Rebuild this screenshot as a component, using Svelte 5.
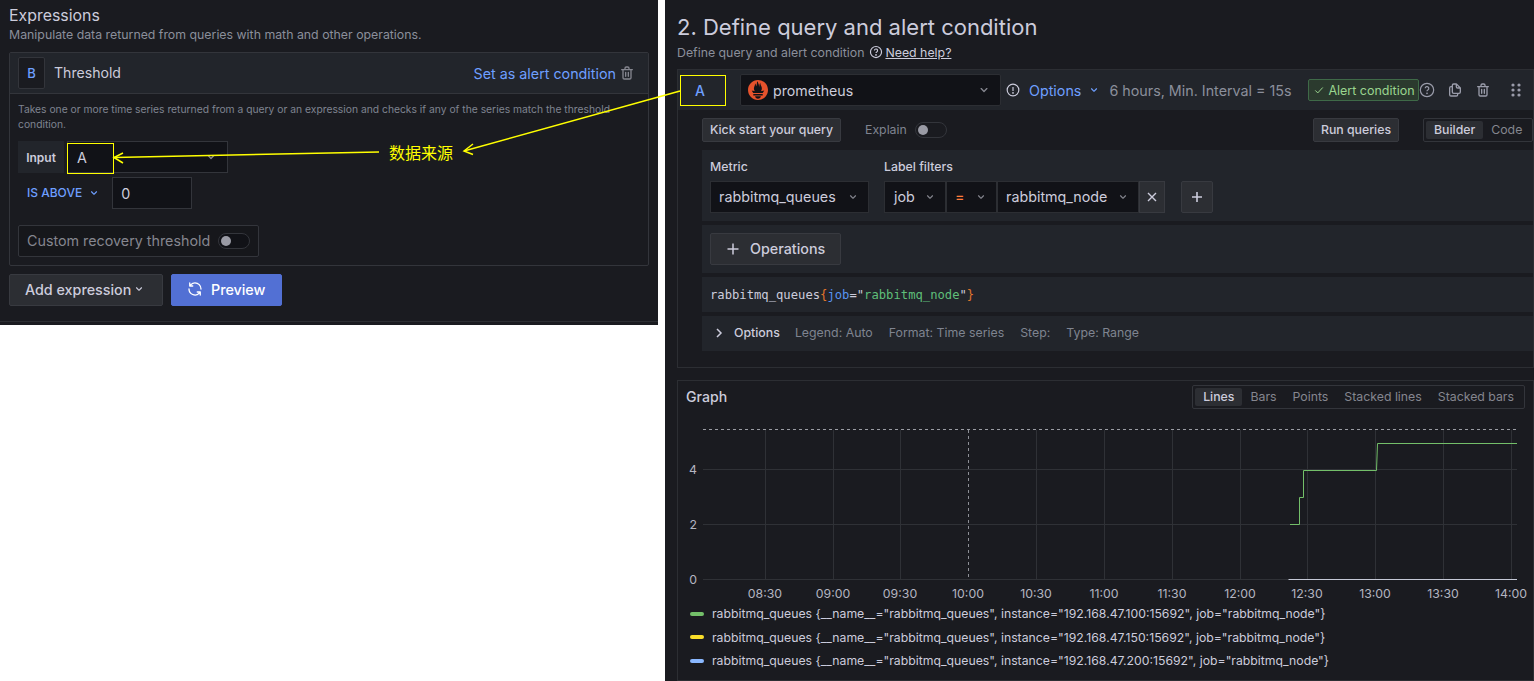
<script>
	const TRASH = 'M10,18a1,1,0,0,0,1-1V11a1,1,0,0,0-2,0v6A1,1,0,0,0,10,18ZM20,6H16V5a3,3,0,0,0-3-3H11A3,3,0,0,0,8,5V6H4A1,1,0,0,0,4,8H5V19a3,3,0,0,0,3,3h8a3,3,0,0,0,3-3V8h1a1,1,0,0,0,0-2ZM10,5a1,1,0,0,1,1-1h2a1,1,0,0,1,1,1V6H10Zm7,14a1,1,0,0,1-1,1H8a1,1,0,0,1-1-1V8H17Zm-3-1a1,1,0,0,0,1-1V11a1,1,0,0,0-2,0v6A1,1,0,0,0,14,18Z';
	const CHEVRON = 'M17,9.17a1,1,0,0,0-1.41,0L12,12.71,8.46,9.17a1,1,0,0,0-1.41,0,1,1,0,0,0,0,1.42l4.24,4.24a1,1,0,0,0,1.42,0L17,10.59A1,1,0,0,0,17,9.17Z';
	const SYNC = 'M19.91,15.51H15.38a1,1,0,0,0,0,2h2.4A8,8,0,0,1,4,12a1,1,0,0,0-2,0,10,10,0,0,0,16.88,7.23V21a1,1,0,0,0,2,0V16.5A1,1,0,0,0,19.91,15.51ZM12,2A10,10,0,0,0,5.12,4.77V3a1,1,0,0,0-2,0V7.5a1,1,0,0,0,1,1h4.5a1,1,0,0,0,0-2H6.22A8,8,0,0,1,20,12a1,1,0,0,0,2,0A10,10,0,0,0,12,2Z';
	const COPY = 'M21,8.94a1.31,1.31,0,0,0-.06-.27l0-.09a1.07,1.07,0,0,0-.19-.28h0l-6-6h0a1.07,1.07,0,0,0-.28-.19.32.32,0,0,0-.09,0A.88.88,0,0,0,14.05,2H10A3,3,0,0,0,7,5V6H6A3,3,0,0,0,3,9V19a3,3,0,0,0,3,3h8a3,3,0,0,0,3-3V18h1a3,3,0,0,0,3-3V9S21,9,21,8.94ZM15,5.41,17.59,8H16a1,1,0,0,1-1-1ZM15,19a1,1,0,0,1-1,1H6a1,1,0,0,1-1-1V9A1,1,0,0,1,6,8H7v7a3,3,0,0,0,3,3h5Zm4-4a1,1,0,0,1-1,1H10a1,1,0,0,1-1-1V5a1,1,0,0,1,1-1h3V7a3,3,0,0,0,3,3h3Z';
	const PROM = 'M12 0C5.373 0 0 5.372 0 12c0 6.627 5.373 12 12 12s12-5.373 12-12c0-6.628-5.373-12-12-12zm0 22.46c-1.885 0-3.414-1.26-3.414-2.814h6.828c0 1.553-1.529 2.813-3.414 2.813zm5.64-3.745H6.36v-2.046h11.28v2.046zm-.04-3.098H6.391c-.037-.043-.075-.086-.111-.13-1.155-1.401-1.427-2.133-1.69-2.879-.005-.025 1.4.287 2.395.511 0 0 .513.119 1.262.255-.72-.843-1.147-1.915-1.147-3.01 0-2.406 1.845-4.508 1.18-6.207.648.053 1.34 1.367 1.387 3.422.689-.951.977-2.69.977-3.755 0-1.103.727-2.385 1.454-2.429-.648 1.068.168 1.984.894 4.256.272.854.237 2.29.447 3.2.07-1.892.395-4.652 1.595-5.605-.529 1.2.079 2.702.494 3.424.671 1.164 1.078 2.047 1.078 3.716a4.642 4.642 0 01-1.11 2.996c.792-.149 1.34-.283 1.34-.283l2.573-.502s-.374 1.538-1.81 3.019z';

	const times = [
		['08:30', 765], ['09:00', 833], ['09:30', 900], ['10:00', 968], ['10:30', 1036], ['11:00', 1104],
		['11:30', 1172], ['12:00', 1240], ['12:30', 1307], ['13:00', 1375], ['13:30', 1443], ['14:00', 1511]
	];
	const ticks = [['4', 469], ['2', 524], ['0', 579]];
	const tabs = ['Lines', 'Bars', 'Points', 'Stacked lines', 'Stacked bars'];
	const legend = [
		{ color: '#73bf69', ip: '192.168.47.100' },
		{ color: '#fade2a', ip: '192.168.47.150' },
		{ color: '#8ab8ff', ip: '192.168.47.200' }
	];
	// chart svg starts at x=678, y=420 of the page
	const ox = 678;
	const oy = 420;
</script>

{#snippet icon(d, size = 16, cls = '')}
	<svg class="ico {cls}" width={size} height={size} viewBox="0 0 24 24" fill="currentColor"><path {d} /></svg>
{/snippet}

<div class="page">
	<section class="left">
		<div class="h-exp">Expressions</div>
		<div class="sub-exp">Manipulate data returned from queries with math and other operations.</div>

		<div class="card">
			<div class="card-head">
				<span class="ref-b">B</span>
				<span class="card-name">Threshold</span>
				<span class="set-alert">Set as alert condition</span>
				{@render icon(TRASH, 16, 'muted')}
			</div>
			<div class="card-body">
				<p class="desc">Takes one or more time series returned from a query or an expression and checks if any of the series match the threshold condition.</p>
				<div class="input-row">
					<span class="input-label">Input</span>
					<div class="input-select">
						<span>A</span>
						{@render icon(CHEVRON, 16, 'muted')}
					</div>
				</div>
				<div class="above-row">
					<span class="above">IS ABOVE</span>
					{@render icon(CHEVRON, 14, 'blue')}
					<span class="zero">0</span>
				</div>
				<div class="recovery">
					<span>Custom recovery threshold</span>
					<span class="toggle"><i></i></span>
				</div>
			</div>
		</div>

		<div class="actions">
			<button class="btn add">Add expression {@render icon(CHEVRON, 14)}</button>
			<button class="btn preview">{@render icon(SYNC, 16)} Preview</button>
		</div>
		<div class="left-rule"></div>
	</section>

	<section class="right">
		<h1>2. Define query and alert condition</h1>
		<div class="sub-def">
			Define query and alert condition
			<svg class="ico" width="14" height="14" viewBox="0 0 24 24" fill="none" stroke="#ccccdc" stroke-width="2"><circle cx="12" cy="12" r="9.5" /><path d="M9.3 9.5a2.7 2.7 0 1 1 4 2.4c-.9.5-1.3 1-1.3 2" /><circle cx="12" cy="17" r=".6" /></svg>
			<span class="help">Need help?</span>
		</div>

		<div class="query">
			<div class="q-head">
				<span class="ref-a">A</span>
				<div class="ds">
					<svg class="ico" width="20" height="20" viewBox="0 0 24 24" fill="#e6522c"><path d={PROM} /></svg>
					<span class="ds-name">prometheus</span>
					{@render icon(CHEVRON, 16, 'muted')}
				</div>
				<svg class="ico info" width="14" height="14" viewBox="0 0 24 24" fill="none" stroke="#ccccdc" stroke-width="2"><circle cx="12" cy="12" r="10" /><path d="M12 7v6.5" /><circle cx="12" cy="17" r=".6" /></svg>
				<span class="opt-link">Options</span>
				{@render icon(CHEVRON, 14, 'blue')}
				<span class="interval">6 hours, Min. Interval = 15s</span>
				<span class="badge">
					<svg width="10" height="10" viewBox="0 0 12 12" fill="none" stroke="#9ad58f" stroke-width="1.2"><path d="M1.5 6.5 4.5 9.5 10.5 3" /></svg>
					Alert condition
				</span>
				<div class="q-icons">
					<svg class="ico" width="16" height="16" viewBox="0 0 24 24" fill="none" stroke="#9a9caa" stroke-width="1.8"><circle cx="12" cy="12" r="10" /><path d="M9.3 9.5a2.7 2.7 0 1 1 4 2.4c-.9.5-1.3 1-1.3 2" /><circle cx="12" cy="17" r=".5" /></svg>
					{@render icon(COPY, 16, 'muted2')}
					{@render icon(TRASH, 16, 'muted2')}
					<svg class="ico drag" width="16" height="16" viewBox="0 0 16 16" fill="#9a9caa"><circle cx="5" cy="3" r="1.6" /><circle cx="11" cy="3" r="1.6" /><circle cx="5" cy="8" r="1.6" /><circle cx="11" cy="8" r="1.6" /><circle cx="5" cy="13" r="1.6" /><circle cx="11" cy="13" r="1.6" /></svg>
				</div>
			</div>

			<div class="q-body">
				<div class="toolbar">
					<button class="btn-s kick">Kick start your query</button>
					<span class="explain">Explain</span>
					<span class="toggle small"><i></i></span>
					<span class="grow"></span>
					<button class="btn-s run">Run queries</button>
					<div class="modes"><span class="on">Builder</span><span>Code</span></div>
				</div>

				<div class="builder">
					<div class="field">
						<div class="f-label">Metric</div>
						<div class="sel metric">rabbitmq_queues {@render icon(CHEVRON, 14, 'muted')}</div>
					</div>
					<div class="field filters">
						<div class="f-label">Label filters</div>
						<div class="filter-row">
							<div class="sel job">job {@render icon(CHEVRON, 14, 'muted')}</div>
							<div class="sel eq"><b>=</b> {@render icon(CHEVRON, 14, 'muted')}</div>
							<div class="sel val">rabbitmq_node {@render icon(CHEVRON, 14, 'muted')}</div>
							<div class="x"><svg width="10" height="10" viewBox="0 0 10 10" stroke="#ccccdc" stroke-width="1.4"><path d="M1 1 9 9M9 1 1 9" /></svg></div>
							<div class="plus"><svg width="12" height="12" viewBox="0 0 12 12" stroke="#ccccdc" stroke-width="1.6"><path d="M6 1v10M1 6h10" /></svg></div>
						</div>
					</div>
				</div>

				<div class="ops">
					<button class="op-btn"><svg width="12" height="12" viewBox="0 0 12 12" stroke="#ccccdc" stroke-width="1.5"><path d="M6 .5v11M.5 6h11" /></svg> Operations</button>
				</div>

				<div class="code"><span>rabbitmq_queues</span><span class="c-o">&#123;</span><span class="c-b">job</span><span>="</span><span class="c-g">rabbitmq_node</span><span>"</span><span class="c-o">&#125;</span></div>

				<div class="opt-row">
					<svg width="8" height="10" viewBox="0 0 8 10" fill="none" stroke="#ccccdc" stroke-width="1.5"><path d="M2 1l4 4-4 4" /></svg>
					<b>Options</b>
					<span>Legend: Auto</span>
					<span>Format: Time series</span>
					<span>Step:</span>
					<span>Type: Range</span>
				</div>
			</div>
		</div>

		<div class="graph">
			<div class="g-head">
				<span class="g-title">Graph</span>
				<div class="g-tabs">
					{#each tabs as tab, i}
						<span class:on={i === 0}>{tab}</span>
					{/each}
				</div>
			</div>
			<svg class="chart" width="855" height="186" viewBox="{ox} {oy} 855 186">
				<g stroke="#2f3136" stroke-width="1">
					{#each ticks as t}
						<line x1="703" x2="1517" y1={t[1] + 0.5} y2={t[1] + 0.5} />
					{/each}
					{#each times as t}
						{#if t[0] !== '10:00'}
							<line x1={t[1] + 0.5} x2={t[1] + 0.5} y1="430" y2="579" />
						{/if}
					{/each}
				</g>
				<line x1="968.5" x2="968.5" y1="430" y2="579" stroke="#8d8f96" stroke-dasharray="3 3" />
				<line x1="703" x2="1517" y1="429.5" y2="429.5" stroke="#9a9ca3" stroke-dasharray="3 3" />
				<path d="M1290 524.5H1299.5V497.5H1303.5V470.5H1376.5L1377.5 443.5H1517" fill="none" stroke="#73bf69" stroke-width="1" />
				<line x1="1288.5" x2="1517" y1="579.5" y2="579.5" stroke="#c5c9d6" stroke-width="1" />
				<g class="axis">
					{#each ticks as t}
						<text x="697" y={t[1] + 5} text-anchor="end">{t[0]}</text>
					{/each}
					{#each times as t}
						<text x={t[1]} y="598" text-anchor="middle">{t[0]}</text>
					{/each}
				</g>
			</svg>
			<div class="legend">
				{#each legend as l}
					<div class="leg-item">
						<i style="background:{l.color}"></i>
						<span>rabbitmq_queues &#123;__name__="rabbitmq_queues", instance="{l.ip}:15692", job="rabbitmq_node"&#125;</span>
					</div>
				{/each}
			</div>
		</div>
	</section>

	<!-- hand drawn annotation on top of the two screenshots -->
	<svg class="notes" width="1534" height="681" viewBox="0 0 1534 681" fill="none" stroke="#ffff00">
		<rect x="67.5" y="143.5" width="46" height="30" />
		<rect x="680.5" y="75.5" width="45" height="30" />
		<path d="M379 152 114 157.5" stroke-width="1.5" />
		<path d="M123 153 114 157.5 123 163" stroke-width="1.5" />
		<path d="M680 91 464 151" stroke-width="1.5" />
		<path d="M473 144 464 151 473 154.5" stroke-width="1.5" />
	</svg>
	<span class="note-text">数据来源</span>
</div>

<style>
	:global(body) {
		margin: 0;
		background: #fff;
	}

	.page {
		position: relative;
		display: flex;
		align-items: flex-start;
		gap: 7px;
		width: 1534px;
		height: 681px;
		overflow: hidden;
		background: #fff;
		font-family: Inter, "Noto Sans", sans-serif;
		color: #ccccdc;
	}

	.ico {
		flex: none;
		display: block;
	}
	.muted { color: #85868f; }
	.muted2 { color: #9a9caa; }
	.blue { color: #6e9fff; }

	button {
		font-family: inherit;
		cursor: pointer;
	}

	/* left screenshot */
	.left {
		flex: none;
		box-sizing: border-box;
		width: 658px;
		height: 325px;
		padding: 6px 9px 0;
		background: #1a1b20;
	}
	.h-exp {
		font-size: 15.9px;
		line-height: 20px;
	}
	.sub-exp {
		font-size: 12.33px;
		line-height: 18px;
		color: #8b8f9b;
	}
	.card {
		margin-top: 8px;
		border: 1px solid #33353b;
		border-radius: 2px;
		height: 214px;
		box-sizing: border-box;
	}
	.card-head {
		display: flex;
		align-items: center;
		height: 40px;
		padding: 0 13px 0 8px;
		background: #22252b;
		border-bottom: 1px solid #33353b;
	}
	.ref-b {
		box-sizing: border-box;
		width: 27px;
		height: 32px;
		display: flex;
		align-items: center;
		justify-content: center;
		border: 1px solid #33353b;
		border-radius: 2px;
		background: #1a1b20;
		color: #6e9fff;
		font-size: 13px;
		font-weight: 500;
	}
	.card-name {
		margin-left: 9px;
		padding-bottom: 2px;
		font-size: 14.1px;
		flex: 1;
	}
	.set-alert {
		color: #6e9fff;
		font-size: 14.3px;
		margin-right: 3px;
	}
	.card-body {
		padding: 8px 8px 0;
	}
	.desc {
		margin: 0;
		width: 606px;
		font-size: 10.31px;
		line-height: 15px;
		color: #7f8490;
	}
	.input-row {
		display: flex;
		margin-top: 9px;
		height: 32px;
	}
	.input-label {
		width: 46px;
		display: flex;
		align-items: center;
		justify-content: center;
		background: #22252b;
		font-size: 12px;
		font-weight: 600;
		margin-right: 3px;
	}
	.input-select {
		box-sizing: border-box;
		width: 161px;
		display: flex;
		align-items: center;
		justify-content: space-between;
		padding: 0 8px 0 9px;
		background: #111217;
		border: 1px solid #33353b;
		font-size: 14.3px;
	}
	.above-row {
		display: flex;
		align-items: center;
		margin-top: 4px;
		height: 32px;
	}
	.above {
		margin-left: 9px;
		margin-right: 5px;
		padding-bottom: 2px;
		color: #6e9fff;
		font-size: 12px;
		font-weight: 500;
	}
	.zero {
		box-sizing: border-box;
		width: 80px;
		height: 32px;
		margin-left: 11px;
		padding-left: 8px;
		line-height: 32px;
		background: #111217;
		border: 1px solid #33353b;
		font-size: 14.3px;
	}
	.recovery {
		box-sizing: border-box;
		display: flex;
		align-items: center;
		justify-content: space-between;
		width: 241px;
		height: 32px;
		margin-top: 16px;
		padding: 0 8px 1px;
		background: #16171b;
		border: 1px solid #33353b;
		border-radius: 2px;
		font-size: 14.3px;
		color: #85868f;
	}
	.toggle {
		box-sizing: border-box;
		flex: none;
		display: block;
		width: 32px;
		height: 16px;
		border: 1px solid #33353b;
		border-radius: 8px;
		background: #111217;
		padding: 2px;
	}
	.toggle i {
		display: block;
		width: 10px;
		height: 10px;
		border-radius: 50%;
		background: #9a9ba5;
	}
	.actions {
		display: flex;
		gap: 8px;
		margin-top: 8px;
	}
	.btn {
		display: flex;
		align-items: center;
		height: 32px;
		padding: 0 15px 2px;
		border: 1px solid #383a40;
		border-radius: 2px;
		font-size: 14.3px;
		font-weight: 500;
		color: #ccccdc;
		white-space: nowrap;
	}
	.add {
		width: 154px;
		gap: 1px;
		background: #2c2e33;
	}
	.preview {
		width: 111px;
		gap: 8px;
		background: #5270d4;
		border-color: #5270d4;
		color: #fff;
	}
	.left-rule {
		height: 1px;
		margin: 15px -9px 0;
		background: #2c2e33;
	}

	/* right screenshot */
	.right {
		flex: none;
		box-sizing: border-box;
		width: 869px;
		height: 681px;
		padding: 13px 0 0 12px;
		background: #1a1b20;
	}
	h1 {
		margin: 0;
		font-size: 22px;
		font-weight: 400;
		line-height: 28px;
	}
	.sub-def {
		display: flex;
		align-items: center;
		gap: 5px;
		margin-top: 2px;
		height: 18px;
		font-size: 12.33px;
		color: #8b8f9b;
	}
	.help {
		color: #ccccdc;
		text-decoration: underline;
		margin-left: -3px;
		padding-left: 0;
	}
	.query {
		box-sizing: border-box;
		margin-top: 8px;
		height: 299px;
		border: 1px solid #2c2e33;
	}
	.q-head {
		display: flex;
		align-items: center;
		height: 40px;
		background: #22252b;
	}
	.ref-a {
		box-sizing: border-box;
		width: 46px;
		margin-left: 2px;
		padding-right: 6px;
		text-align: center;
		color: #6e9fff;
		font-size: 14px;
		font-weight: 500;
	}
	.ds {
		box-sizing: border-box;
		width: 261px;
		height: 32px;
		margin-left: 14px;
		display: flex;
		align-items: center;
		gap: 5px;
		padding: 0 8px 0 7px;
		background: #111217;
		border: 1px solid #2c2e33;
		border-radius: 2px;
	}
	.ds-name {
		flex: 1;
		font-size: 14.2px;
	}
	.info {
		margin-left: 5px;
	}
	.opt-link {
		margin: 0 6px 0 9px;
		color: #6e9fff;
		font-size: 14.3px;
	}
	.interval {
		margin-left: 8px;
		width: 199px;
		font-size: 14.3px;
		color: #8b8f9b;
	}
	.badge {
		box-sizing: border-box;
		display: flex;
		align-items: center;
		gap: 4px;
		width: 111px;
		height: 22px;
		padding-left: 5px;
		background: #2b3a2e;
		border: 1px solid #3f6a48;
		border-radius: 2px;
		font-size: 12.5px;
		color: #9ad58f;
		white-space: nowrap;
	}
	.q-icons {
		display: flex;
		align-items: center;
		gap: 12px;
	}
	.drag {
		margin-left: 5px;
	}
	.q-body {
		padding-left: 24px;
	}
	.toolbar {
		display: flex;
		align-items: center;
		height: 40px;
	}
	.grow {
		flex: 1;
	}
	.btn-s {
		height: 24px;
		padding: 0 0 2px;
		background: #2c2e33;
		border: 1px solid #383a40;
		border-radius: 2px;
		color: #ccccdc;
		font-size: 12.3px;
		font-weight: 500;
	}
	.kick {
		width: 139px;
	}
	.run {
		width: 86px;
	}
	.explain {
		margin: 0 8px 0 24px;
		padding-bottom: 2px;
		font-size: 12.3px;
		color: #7f8490;
	}
	.toggle.small {
		background: transparent;
	}
	.modes {
		box-sizing: border-box;
		display: flex;
		align-items: center;
		width: 110px;
		height: 24px;
		margin-left: 24px;
		padding: 2px;
		border: 1px solid #33353b;
		border-radius: 2px;
		font-size: 12.3px;
		color: #85868f;
	}
	.modes span {
		padding: 0 8px;
		line-height: 18px;
		border-radius: 2px;
	}
	.modes .on {
		background: #2c2e33;
		color: #ccccdc;
		font-weight: 500;
	}
	.builder {
		display: flex;
		gap: 16px;
		height: 71px;
		box-sizing: border-box;
		padding: 8px 8px 0;
		background: #22252b;
	}
	.f-label {
		font-size: 12.3px;
		font-weight: 500;
		line-height: 16px;
		margin-bottom: 7px;
		padding-top: 1px;
		height: 15px;
	}
	.sel {
		box-sizing: border-box;
		display: flex;
		align-items: center;
		justify-content: space-between;
		height: 32px;
		padding: 0 8px 1px;
		background: #111217;
		border: 1px solid #2c2e33;
		font-size: 14.3px;
	}
	.metric {
		width: 159px;
	}
	.filter-row {
		display: flex;
	}
	.job {
		width: 62px;
		padding-left: 9px;
	}
	.eq {
		width: 51px;
	}
	.eq b {
		color: #ff7c3b;
		font-weight: 400;
	}
	.val {
		width: 142px;
	}
	.x {
		box-sizing: border-box;
		display: flex;
		align-items: center;
		justify-content: center;
		width: 26px;
		height: 32px;
		background: #2c2e33;
		border: 1px solid #383a40;
	}
	.plus {
		box-sizing: border-box;
		display: flex;
		align-items: center;
		justify-content: center;
		width: 32px;
		height: 32px;
		margin-left: 16px;
		background: #2c2e33;
		border: 1px solid #383a40;
		border-radius: 2px;
	}
	.filters {
		margin-left: -1px;
	}
	.ops {
		margin-top: 4px;
		height: 48px;
		box-sizing: border-box;
		padding: 8px;
		background: #22252b;
	}
	.op-btn {
		display: flex;
		align-items: center;
		gap: 11px;
		box-sizing: border-box;
		width: 131px;
		height: 32px;
		padding: 0 0 1px 16px;
		background: #2c2e33;
		border: 1px solid #383a40;
		border-radius: 2px;
		color: #ccccdc;
		font-size: 14.3px;
		font-weight: 500;
	}
	.code {
		margin-top: 4px;
		height: 35px;
		box-sizing: border-box;
		padding-left: 8px;
		line-height: 36px;
		background: #22252b;
		font-family: "DejaVu Sans Mono", "Liberation Mono", monospace;
		font-size: 12.2px;
		color: #ccccdc;
	}
	.c-o { color: #e0752d; }
	.c-b { color: #5794f2; }
	.c-g { color: #5fbf7a; }
	.opt-row {
		display: flex;
		align-items: center;
		box-sizing: border-box;
		margin-top: 4px;
		height: 35px;
		padding: 0 0 2px 13px;
		background: #22252b;
		font-size: 12.33px;
		color: #7f8490;
	}
	.opt-row b {
		margin: 0 15px 0 11px;
		font-weight: 500;
		color: #ccccdc;
	}
	.opt-row span {
		margin-right: 16px;
	}
	.graph {
		box-sizing: border-box;
		margin-top: 12px;
		height: 301px;
		border: 1px solid #2c2e33;
	}
	.g-head {
		display: flex;
		align-items: center;
		justify-content: space-between;
		height: 32px;
		padding: 0 8px;
	}
	.g-title {
		font-size: 14.1px;
		font-weight: 500;
		padding-bottom: 2px;
	}
	.g-tabs {
		box-sizing: border-box;
		display: flex;
		align-items: center;
		height: 24px;
		padding: 0 2px;
		border: 1px solid #33353b;
		border-radius: 2px;
		font-size: 12.3px;
		color: #85868f;
	}
	.g-tabs span {
		padding: 0 8px;
		line-height: 18px;
		border-radius: 2px;
	}
	.g-tabs .on {
		background: #2c2e33;
		color: #ccccdc;
		font-weight: 500;
	}
	.chart {
		display: block;
		margin-top: 7px;
	}
	.axis text {
		fill: #b4b5c0;
		font-size: 12.3px;
		font-family: Inter, sans-serif;
	}
	.legend {
		padding-left: 12px;
		margin-top: -4px;
	}
	.leg-item {
		display: flex;
		align-items: center;
		gap: 8px;
		height: 23.5px;
		font-size: 12.26px;
		color: #ccccdc;
		white-space: nowrap;
	}
	.leg-item i {
		width: 14px;
		height: 4px;
		border-radius: 2px;
	}

	/* annotation */
	.notes {
		position: absolute;
		left: 0;
		top: 0;
		pointer-events: none;
	}
	.note-text {
		position: absolute;
		left: 389px;
		top: 141px;
		font-family: "Noto Sans CJK SC", sans-serif;
		font-size: 16px;
		line-height: 22px;
		color: #ffff00;
	}
</style>
